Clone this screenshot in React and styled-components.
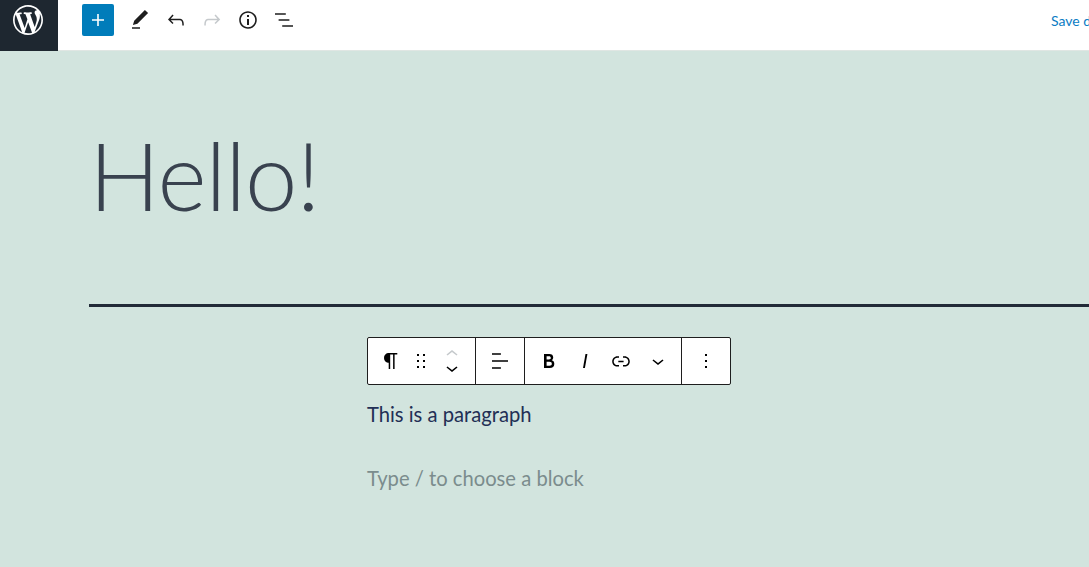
import React from 'react';
import styled, { createGlobalStyle } from 'styled-components';

const GlobalStyle = createGlobalStyle`
  html, body {
    margin: 0;
    padding: 0;
    height: 100%;
    overflow: hidden;
    background: #d2e4de;
  }
`;

const Page = styled.div`
  width: 1089px;
  height: 567px;
  display: flex;
  flex-direction: column;
  overflow: hidden;
  font-family: 'Lato', sans-serif;
`;

const Header = styled.header`
  height: 50px;
  flex: none;
  display: flex;
  background: #fff;
  border-bottom: 1px solid #e0e6e3;
`;

const Logo = styled.a`
  width: 58px;
  height: 51px;
  box-sizing: border-box;
  padding: 0 2px 11px 0;
  flex: none;
  display: flex;
  align-items: center;
  justify-content: center;
  background: #1e2730;
  color: #fff;
`;

const Tools = styled.div`
  display: flex;
  align-items: flex-start;
  padding: 4px 0 0 24px;
`;

const AddButton = styled.button`
  width: 32px;
  height: 32px;
  margin-right: 8px;
  padding: 0;
  border: 0;
  border-radius: 2px;
  display: flex;
  align-items: center;
  justify-content: center;
  background: #007cba;
  color: #fff;
`;

const ToolButton = styled.button`
  width: 36px;
  height: 32px;
  padding: 0;
  border: 0;
  background: none;
  display: flex;
  align-items: center;
  justify-content: center;
  color: ${(p) => (p.$disabled ? '#c5c9cc' : '#1e1e1e')};
`;

const SaveDraft = styled.a`
  margin: 12px 0 0 auto;
  width: 38px;
  white-space: nowrap;
  font-size: 14px;
  line-height: 18px;
  color: #0a7cc4;
`;

const Canvas = styled.main`
  flex: 1;
  padding-left: 89px;
  background: #d2e4de;
`;

const Title = styled.h1`
  margin: 0;
  height: 253px;
  padding: 68px 0 0 0;
  box-sizing: border-box;
  font-size: 94px;
  font-weight: 300;
  line-height: 112px;
  letter-spacing: -1px;
  color: #39424f;
`;

const Rule = styled.hr`
  margin: 0;
  height: 3px;
  border: 0;
  background: #222b38;
`;

const Content = styled.div`
  width: 364px;
  margin-left: 278px;
  padding-top: 30px;
`;

const BlockToolbar = styled.div`
  height: 48px;
  box-sizing: border-box;
  display: flex;
  background: #fff;
  border: 1px solid #1e1e1e;
  border-radius: 2px;
`;

const Group = styled.div`
  width: ${(p) => p.$width}px;
  box-sizing: border-box;
  flex: none;
  display: flex;
  align-items: center;
  padding-left: ${(p) => p.$pad || 0}px;
  border-right: ${(p) => (p.$last ? '0' : '1px solid #1e1e1e')};
`;

const BarButton = styled.span`
  width: ${(p) => p.$width || 36}px;
  flex: none;
  display: flex;
  align-items: center;
  justify-content: center;
`;

const Movers = styled.span`
  width: 38px;
  flex: none;
  display: flex;
  flex-direction: column;
  align-items: center;

  svg {
    margin: -5px 0;
  }
`;

const Paragraph = styled.p`
  margin: 15px 0 0;
  font-size: 20.2px;
  line-height: 28px;
  white-space: nowrap;
  color: ${(p) => (p.$placeholder ? '#7b8c8d' : '#222f55')};
`;

const Placeholder = styled(Paragraph)`
  margin-top: 36px;
`;

const Icon = ({ d, size = 24, color = 'currentColor' }) => (
  <svg width={size} height={size} viewBox="0 0 24 24" fill={color} aria-hidden="true">
    <path d={d} />
  </svg>
);

const paths = {
  plus: 'M18 11.2h-5.2V6h-1.6v5.2H6v1.6h5.2V18h1.6v-5.2H18z',
  edit: 'M20.1 5.1L16.9 2 6.2 12.7l-1.3 4.4 4.5-1.3L20.1 5.1zM4 20.8h8v-1.5H4v1.5z',
  undo: 'M18.3 11.7c-.6-.6-1.4-.9-2.3-.9H6.7l2.9-3.3-1.1-1-4.5 5L8.5 16l1-1-2.7-2.7H16c.5 0 .9.2 1.3.5 1 1 1 3.4 1 4.5v.3h1.5v-.2c0-1.5 0-4.3-1.5-5.7z',
  redo: 'M15.6 6.5l-1.1 1 2.9 3.3H8c-.9 0-1.7.3-2.3.9-1.4 1.5-1.4 4.2-1.4 5.6v.2h1.5v-.3c0-1.1 0-3.5 1-4.5.3-.3.7-.5 1.3-.5h9.2L14.5 15l1.1 1.1 4.6-4.6-4.6-5z',
  info: 'M12 3.2c-4.8 0-8.8 3.9-8.8 8.8 0 4.8 3.9 8.8 8.8 8.8 4.8 0 8.8-3.9 8.8-8.8 0-4.8-4-8.8-8.8-8.8zm0 16c-4 0-7.2-3.3-7.2-7.2C4.8 8 8 4.8 12 4.8s7.2 3.3 7.2 7.2c0 4-3.2 7.2-7.2 7.2zM11 17h2v-6h-2v6zm0-8h2V7h-2v2z',
  list: 'M13.8 5.2H3v1.5h10.8V5.2zm-3.6 12v1.5H21v-1.5H10.2zm7.2-6H6.6v1.5h10.8v-1.5z',
  paragraph: 'M18.3 4H9.9v-.1l-.9.2c-2.3.4-4 2.4-4 4.8s1.7 4.4 4 4.8l.7.1V20h1.5V5.5h2.9V20h1.5V5.5h2.7V4z',
  drag: 'M8 7h2V5H8v2zm0 6h2v-2H8v2zm0 6h2v-2H8v2zm6-14v2h2V5h-2zm0 8h2v-2h-2v2zm0 6h2v-2h-2v2z',
  up: 'M6.5 12.4L12 8l5.5 4.4-.9 1.2L12 10l-4.5 3.6-1-1.2z',
  down: 'M17.5 11.6L12 16l-5.5-4.4.9-1.2L12 14l4.5-3.6 1 1.2z',
  alignLeft: 'M4 19.8h8.9v-1.5H4v1.5zm8.9-15.6H4v1.5h8.9V4.2zm-8.9 7v1.5h16v-1.5H4z',
  bold: 'M14.7 11.3c1-.6 1.5-1.6 1.5-3 0-2.3-1.3-3.4-4-3.4H7v14h5.8c1.4 0 2.5-.3 3.3-1 .8-.7 1.2-1.7 1.2-2.9.1-1.9-.8-3.1-2.6-3.7zm-5.1-4h2.3c.6 0 1.1.1 1.4.4.3.3.5.7.5 1.2s-.2 1-.5 1.2c-.3.3-.8.4-1.4.4H9.6V7.3zm4.6 9c-.4.3-1 .4-1.7.4H9.6v-3.9h2.9c.7 0 1.3.2 1.7.5.4.3.6.8.6 1.5s-.2 1.2-.6 1.5z',
  italic: 'M12.5 5L10 19h1.9l2.5-14z',
  link: 'M15.6 7.2H14v1.5h1.6c2 0 3.7 1.7 3.7 3.7s-1.7 3.7-3.7 3.7H14v1.5h1.6c2.8 0 5.2-2.3 5.2-5.2 0-2.9-2.3-5.2-5.2-5.2zM4.7 12.4c0-2 1.7-3.7 3.7-3.7H10V7.2H8.4c-2.9 0-5.2 2.3-5.2 5.2 0 2.9 2.3 5.2 5.2 5.2H10v-1.5H8.4c-2 0-3.7-1.7-3.7-3.7zm4.6.9h5.3v-1.5H9.3v1.5z',
  more: 'M13 19h-2v-2h2v2zm0-6h-2v-2h2v2zm0-6h-2V5h2v2z',
};

const wpLogo =
  'M20 10c0-5.51-4.49-10-10-10C4.48 0 0 4.49 0 10c0 5.52 4.48 10 10 10 5.51 0 10-4.48 10-10zM7.78 15.37L4.37 6.22c.55-.02 1.17-.08 1.17-.08.5-.06.44-1.13-.06-1.11 0 0-1.45.11-2.37.11-.18 0-.37 0-.58-.01C4.12 2.69 6.87 1.11 10 1.11c2.33 0 4.45.87 6.05 2.34-.68-.11-1.65.39-1.65 1.58 0 .74.45 1.36.9 2.1.35.61.55 1.36.55 2.46 0 1.49-1.4 5-1.4 5l-3.03-8.37c.54-.02.82-.17.82-.17.5-.05.44-1.25-.06-1.22 0 0-1.44.12-2.38.12-.87 0-2.33-.12-2.33-.12-.5-.03-.56 1.2-.06 1.22l.92.08 1.26 3.41zM17.41 10c.24-.64.74-1.87.43-4.25.7 1.29 1.05 2.71 1.05 4.25 0 3.29-1.73 6.24-4.4 7.78.97-2.59 1.94-5.2 2.92-7.78zM6.1 18.09C3.12 16.65 1.11 13.53 1.11 10c0-1.3.23-2.48.72-3.59C3.25 10.3 4.67 14.2 6.1 18.09zm4.03-6.63l2.58 6.98c-.86.29-1.76.45-2.71.45-.79 0-1.57-.11-2.29-.33.81-2.38 1.62-4.74 2.42-7.1z';

const App = () => (
  <Page>
    <GlobalStyle />
    <Header>
      <Logo>
        <svg width="30" height="30" viewBox="0 0 20 20" fill="currentColor" aria-hidden="true">
          <path d={wpLogo} />
        </svg>
      </Logo>
      <Tools>
        <AddButton>
          <Icon d={paths.plus} />
        </AddButton>
        <ToolButton>
          <Icon d={paths.edit} />
        </ToolButton>
        <ToolButton>
          <Icon d={paths.undo} />
        </ToolButton>
        <ToolButton $disabled>
          <Icon d={paths.redo} />
        </ToolButton>
        <ToolButton>
          <Icon d={paths.info} />
        </ToolButton>
        <ToolButton>
          <Icon d={paths.list} />
        </ToolButton>
      </Tools>
      <SaveDraft>Save draft</SaveDraft>
    </Header>
    <Canvas>
      <Title>Hello!</Title>
      <Rule />
      <Content>
        <BlockToolbar>
          <Group $width={108} $pad={5}>
            <BarButton $width={36}>
              <Icon d={paths.paragraph} />
            </BarButton>
            <BarButton $width={24}>
              <Icon d={paths.drag} />
            </BarButton>
            <Movers>
              <Icon d={paths.up} color="#c5c9cc" />
              <Icon d={paths.down} />
            </Movers>
          </Group>
          <Group $width={49}>
            <BarButton $width={48}>
              <Icon d={paths.alignLeft} />
            </BarButton>
          </Group>
          <Group $width={157} $pad={6}>
            <BarButton>
              <Icon d={paths.bold} />
            </BarButton>
            <BarButton>
              <Icon d={paths.italic} />
            </BarButton>
            <BarButton>
              <Icon d={paths.link} />
            </BarButton>
            <BarButton $width={38}>
              <Icon d={paths.down} />
            </BarButton>
          </Group>
          <Group $width={48} $last>
            <BarButton $width={48}>
              <Icon d={paths.more} />
            </BarButton>
          </Group>
        </BlockToolbar>
        <Paragraph>This is a paragraph</Paragraph>
        <Placeholder $placeholder>Type / to choose a block</Placeholder>
      </Content>
    </Canvas>
  </Page>
);

export default App;
